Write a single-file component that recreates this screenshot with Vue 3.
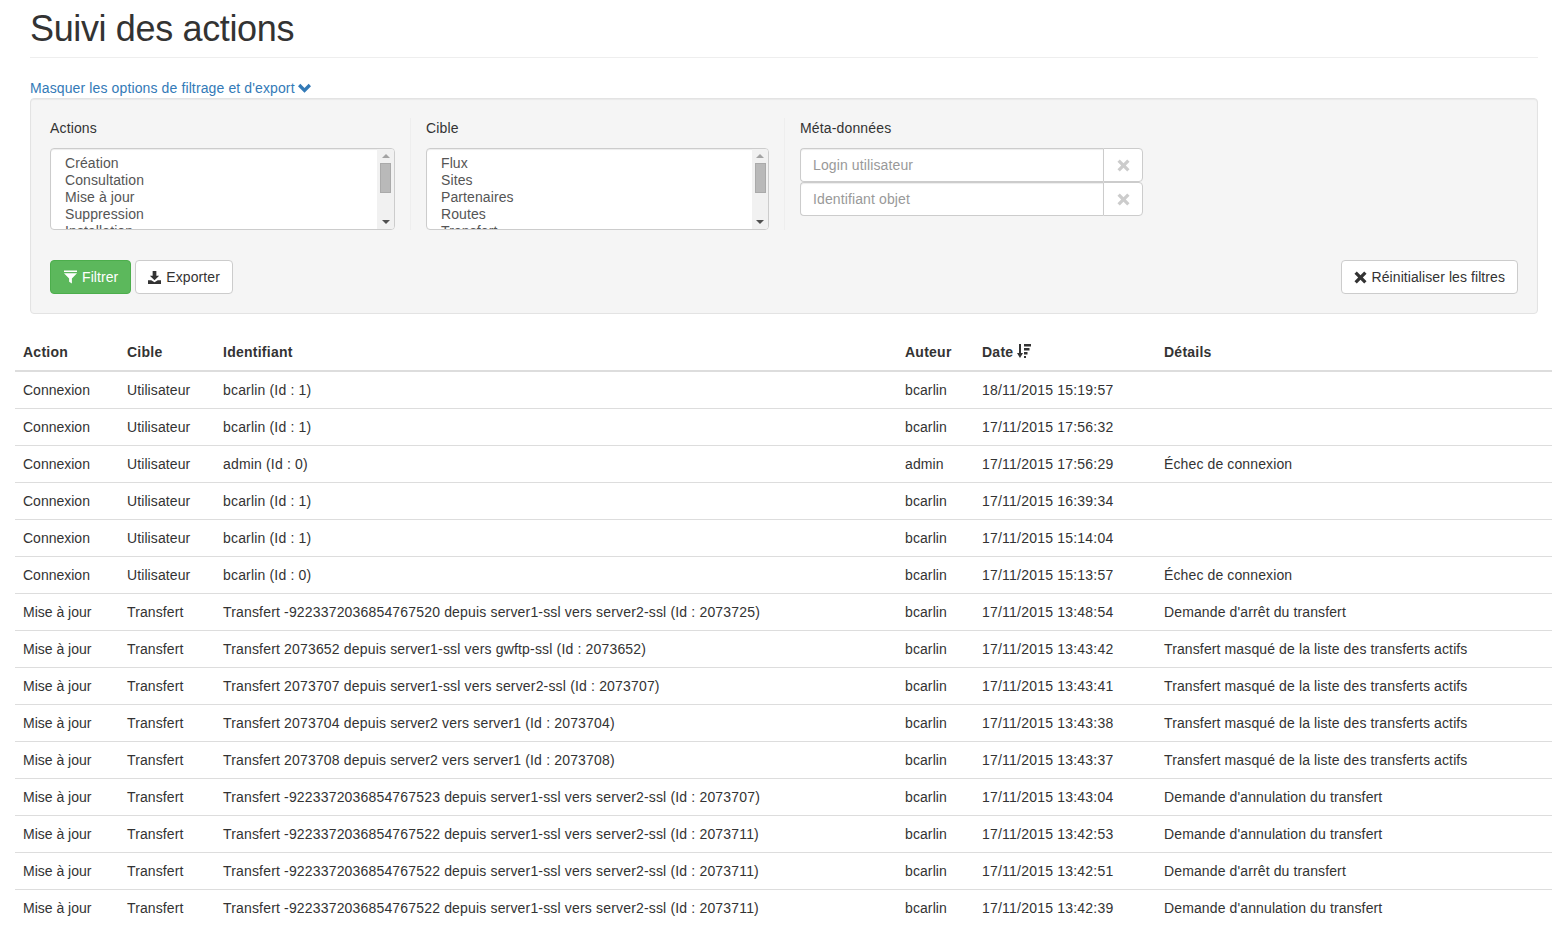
<script setup>
  const action_options = [ 'Création', 'Consultation', 'Mise à jour', 'Suppression', 'Installation' ]
  const target_options = [ 'Flux', 'Sites', 'Partenaires', 'Routes', 'Transfert' ]

  const rows = [
    [ 'Connexion', 'Utilisateur', 'bcarlin (Id : 1)', 'bcarlin', '18/11/2015 15:19:57', '' ],
    [ 'Connexion', 'Utilisateur', 'bcarlin (Id : 1)', 'bcarlin', '17/11/2015 17:56:32', '' ],
    [ 'Connexion', 'Utilisateur', 'admin (Id : 0)', 'admin', '17/11/2015 17:56:29', 'Échec de connexion' ],
    [ 'Connexion', 'Utilisateur', 'bcarlin (Id : 1)', 'bcarlin', '17/11/2015 16:39:34', '' ],
    [ 'Connexion', 'Utilisateur', 'bcarlin (Id : 1)', 'bcarlin', '17/11/2015 15:14:04', '' ],
    [ 'Connexion', 'Utilisateur', 'bcarlin (Id : 0)', 'bcarlin', '17/11/2015 15:13:57', 'Échec de connexion' ],
    [ 'Mise à jour', 'Transfert', 'Transfert -9223372036854767520 depuis server1-ssl vers server2-ssl (Id : 2073725)', 'bcarlin', '17/11/2015 13:48:54', 'Demande d\'arrêt du transfert' ],
    [ 'Mise à jour', 'Transfert', 'Transfert 2073652 depuis server1-ssl vers gwftp-ssl (Id : 2073652)', 'bcarlin', '17/11/2015 13:43:42', 'Transfert masqué de la liste des transferts actifs' ],
    [ 'Mise à jour', 'Transfert', 'Transfert 2073707 depuis server1-ssl vers server2-ssl (Id : 2073707)', 'bcarlin', '17/11/2015 13:43:41', 'Transfert masqué de la liste des transferts actifs' ],
    [ 'Mise à jour', 'Transfert', 'Transfert 2073704 depuis server2 vers server1 (Id : 2073704)', 'bcarlin', '17/11/2015 13:43:38', 'Transfert masqué de la liste des transferts actifs' ],
    [ 'Mise à jour', 'Transfert', 'Transfert 2073708 depuis server2 vers server1 (Id : 2073708)', 'bcarlin', '17/11/2015 13:43:37', 'Transfert masqué de la liste des transferts actifs' ],
    [ 'Mise à jour', 'Transfert', 'Transfert -9223372036854767523 depuis server1-ssl vers server2-ssl (Id : 2073707)', 'bcarlin', '17/11/2015 13:43:04', 'Demande d\'annulation du transfert' ],
    [ 'Mise à jour', 'Transfert', 'Transfert -9223372036854767522 depuis server1-ssl vers server2-ssl (Id : 2073711)', 'bcarlin', '17/11/2015 13:42:53', 'Demande d\'annulation du transfert' ],
    [ 'Mise à jour', 'Transfert', 'Transfert -9223372036854767522 depuis server1-ssl vers server2-ssl (Id : 2073711)', 'bcarlin', '17/11/2015 13:42:51', 'Demande d\'arrêt du transfert' ],
    [ 'Mise à jour', 'Transfert', 'Transfert -9223372036854767522 depuis server1-ssl vers server2-ssl (Id : 2073711)', 'bcarlin', '17/11/2015 13:42:39', 'Demande d\'annulation du transfert' ],
  ]

  const remove_path = 'M3 0.5 L7 4.5 L11 0.5 L13.5 3 L9.5 7 L13.5 11 L11 13.5 L7 9.5 L3 13.5 L0.5 11 L4.5 7 L0.5 3 Z'
</script>

<template>
  <div class="page">
    <div class="inner">
      <header class="page_header">
        <h1>Suivi des actions</h1>
      </header>

      <a class="toggle_link" href="#">
        Masquer les options de filtrage et d'export
        <svg class="chevron" viewBox="0 0 14 10" width="13" height="10">
          <path d="M0 3 L2.5 0.5 L7 5 L11.5 0.5 L14 3 L7 10 Z" fill="currentColor" />
        </svg>
      </a>

      <div class="well">
        <div class="filters">
          <div class="filter_col col_actions">
            <label>Actions</label>
            <div class="list_box">
              <div class="list_items">
                <div v-for="item in action_options" :key="item">{{ item }}</div>
              </div>
              <div class="fake_scroll">
                <span class="arrow up"></span>
                <span class="thumb"></span>
                <span class="arrow down"></span>
              </div>
            </div>
          </div>

          <div class="filter_col col_target">
            <label>Cible</label>
            <div class="list_box">
              <div class="list_items">
                <div v-for="item in target_options" :key="item">{{ item }}</div>
              </div>
              <div class="fake_scroll">
                <span class="arrow up"></span>
                <span class="thumb"></span>
                <span class="arrow down"></span>
              </div>
            </div>
          </div>

          <div class="filter_col col_meta">
            <label>Méta-données</label>
            <div class="input_group">
              <input type="text" placeholder="Login utilisateur" />
              <span class="addon">
                <svg viewBox="0 0 14 14" width="13" height="13"><path :d="remove_path" fill="currentColor" /></svg>
              </span>
            </div>
            <div class="input_group">
              <input type="text" placeholder="Identifiant objet" />
              <span class="addon">
                <svg viewBox="0 0 14 14" width="13" height="13"><path :d="remove_path" fill="currentColor" /></svg>
              </span>
            </div>
          </div>
        </div>

        <div class="button_row">
          <button class="btn btn_green">
            <svg viewBox="0 0 14 14" width="13" height="14"><path d="M0 0 H14 V1.5 H0 Z M0 3 H14 L8.5 8.5 V14 L5.5 12 V8.5 Z" fill="currentColor" /></svg>
            Filtrer
          </button>
          <button class="btn">
            <svg viewBox="0 0 14 14" width="13" height="13"><path d="M5 0 H9 V5 H12 L7 10 L2 5 H5 Z M0 10 H3.5 L7 12 L10.5 10 H14 V14 H0 Z" fill="currentColor" /></svg>
            Exporter
          </button>
          <button class="btn btn_reset">
            <svg viewBox="0 0 14 14" width="13" height="13"><path :d="remove_path" fill="currentColor" /></svg>
            Réinitialiser les filtres
          </button>
        </div>
      </div>
    </div>

    <table class="log_table">
      <colgroup>
        <col style="width: 104px" />
        <col style="width: 96px" />
        <col style="width: 682px" />
        <col style="width: 77px" />
        <col style="width: 182px" />
        <col />
      </colgroup>
      <thead>
        <tr>
          <th>Action</th>
          <th>Cible</th>
          <th>Identifiant</th>
          <th>Auteur</th>
          <th>
            Date
            <svg class="sort_icon" viewBox="0 0 14 14" width="14" height="14">
              <path d="M2 0 H4 V9 H6 L3 14 L0 9 H2 Z M7 0 H14 V2.5 H7 Z M7 4 H12.5 V6.5 H7 Z M7 8 H10.5 V10.5 H7 Z M7 12 H9 V14 H7 Z" fill="currentColor" />
            </svg>
          </th>
          <th>Détails</th>
        </tr>
      </thead>
      <tbody>
        <tr v-for="(row, index) in rows" :key="index">
          <td v-for="(cell, cell_index) in row" :key="cell_index">{{ cell }}</td>
        </tr>
      </tbody>
    </table>
  </div>
</template>

<style scoped>
  .page {
    padding: 9px 13px 0 15px;
    color: #333;
    font-family: "Liberation Sans", Arial, sans-serif;
    font-size: 14px;
    line-height: 20px;
  }

  .inner {
    padding: 0 14px 0 15px;
  }

  .page_header {
    padding-bottom: 8px;
    margin-bottom: 20px;
    border-bottom: 1px solid #eee;
  }
  .page_header h1 {
    margin: 0;
    font-size: 36px;
    font-weight: 500;
    line-height: 40px;
    letter-spacing: -.36px;
  }

  .toggle_link {
    display: block;
    height: 20px;
    color: #337ab7;
    text-decoration: none;
    letter-spacing: .12px;
  }
  .chevron {
    margin-left: -1px;
    vertical-align: 0;
  }

  .well {
    min-height: 20px;
    padding: 19px;
    margin-bottom: 20px;
    background: #f5f5f5;
    border: 1px solid #e3e3e3;
    border-radius: 4px;
    box-shadow: inset 0 1px 1px rgba(0, 0, 0, .05);
  }

  .filters {
    display: flex;
  }
  .filter_col label {
    display: block;
    margin-bottom: 10px;
    font-weight: 400;
    letter-spacing: .15px;
  }
  .col_actions,
  .col_target {
    padding-right: 15px;
    margin-right: 15px;
    border-right: 1px solid #eee;
  }
  .col_actions .list_box {
    width: 345px;
  }
  .col_target .list_box {
    width: 343px;
  }
  .col_target .fake_scroll {
    width: 16px;
  }
  .col_meta {
    width: 343px;
  }

  .list_box {
    display: flex;
    height: 82px;
    box-sizing: border-box;
    overflow: hidden;
    background: #fff;
    border: 1px solid #ccc;
    border-radius: 4px;
    box-shadow: inset 0 1px 1px rgba(0, 0, 0, .075);
  }
  .list_items {
    flex: 1;
    padding: 6px 14px;
    overflow: hidden;
    color: #555;
    line-height: 17px;
    letter-spacing: .1px;
  }

  .fake_scroll {
    display: flex;
    flex-direction: column;
    align-items: center;
    width: 17px;
    background: #f1f1f1;
  }
  .thumb {
    width: 11px;
    height: 30px;
    margin-top: 5px;
    background: #b9b9b9;
    border: 1px solid #aaa;
    box-sizing: border-box;
  }
  .arrow {
    width: 0;
    height: 0;
    border-left: 4px solid transparent;
    border-right: 4px solid transparent;
  }
  .arrow.up {
    margin-top: 5px;
    border-bottom: 4px solid #a3a3a3;
  }
  .arrow.down {
    margin-top: auto;
    margin-bottom: 5px;
    border-top: 4px solid #505050;
  }

  .input_group {
    display: flex;
    height: 34px;
  }
  .input_group input {
    flex: 1;
    min-width: 0;
    padding: 6px 12px;
    color: #555;
    background: #fff;
    border: 1px solid #ccc;
    border-right: 0;
    border-radius: 4px 0 0 4px;
    box-shadow: inset 0 1px 1px rgba(0, 0, 0, .075);
    font: inherit;
    letter-spacing: .12px;
    outline: none;
  }
  .input_group input::placeholder {
    color: #999;
    opacity: 1;
  }
  .addon {
    display: flex;
    align-items: center;
    justify-content: center;
    width: 40px;
    box-sizing: border-box;
    color: #ccc;
    background: #fff;
    border: 1px solid #ccc;
    border-radius: 0 4px 4px 0;
  }

  .button_row {
    display: flex;
    gap: 4px;
    margin-top: 30px;
  }
  .btn {
    display: inline-flex;
    align-items: center;
    gap: 5px;
    height: 34px;
    padding: 6px 12px;
    color: #333;
    background: #fff;
    border: 1px solid #ccc;
    border-radius: 4px;
    font: inherit;
    letter-spacing: .08px;
  }
  .btn_green {
    padding-left: 13px;
    color: #fff;
    background: #5cb85c;
    border-color: #4cae4c;
  }
  .btn_reset {
    margin-left: auto;
  }

  .log_table {
    width: 1537px;
    table-layout: fixed;
    border-collapse: collapse;
  }
  .log_table th,
  .log_table td {
    padding: 8px;
    text-align: left;
    vertical-align: top;
    line-height: 20px;
  }
  .log_table th {
    font-weight: 700;
    letter-spacing: .25px;
    border-bottom: 2px solid #ddd;
  }
  .log_table td {
    border-top: 1px solid #ddd;
  }
  .log_table td:nth-child(2),
  .log_table td:nth-child(4) {
    letter-spacing: .1px;
  }
  .log_table td:nth-child(3) {
    letter-spacing: .17px;
  }
  .log_table td:nth-child(5) {
    letter-spacing: .21px;
  }
  .log_table td:nth-child(6) {
    letter-spacing: .12px;
  }
  .log_table thead + tbody tr:first-child td {
    border-top: 0;
  }
  .sort_icon {
    vertical-align: -1px;
  }
</style>

<style>
  html, body {
    margin: 0;
    background: #fff;
  }
</style>
